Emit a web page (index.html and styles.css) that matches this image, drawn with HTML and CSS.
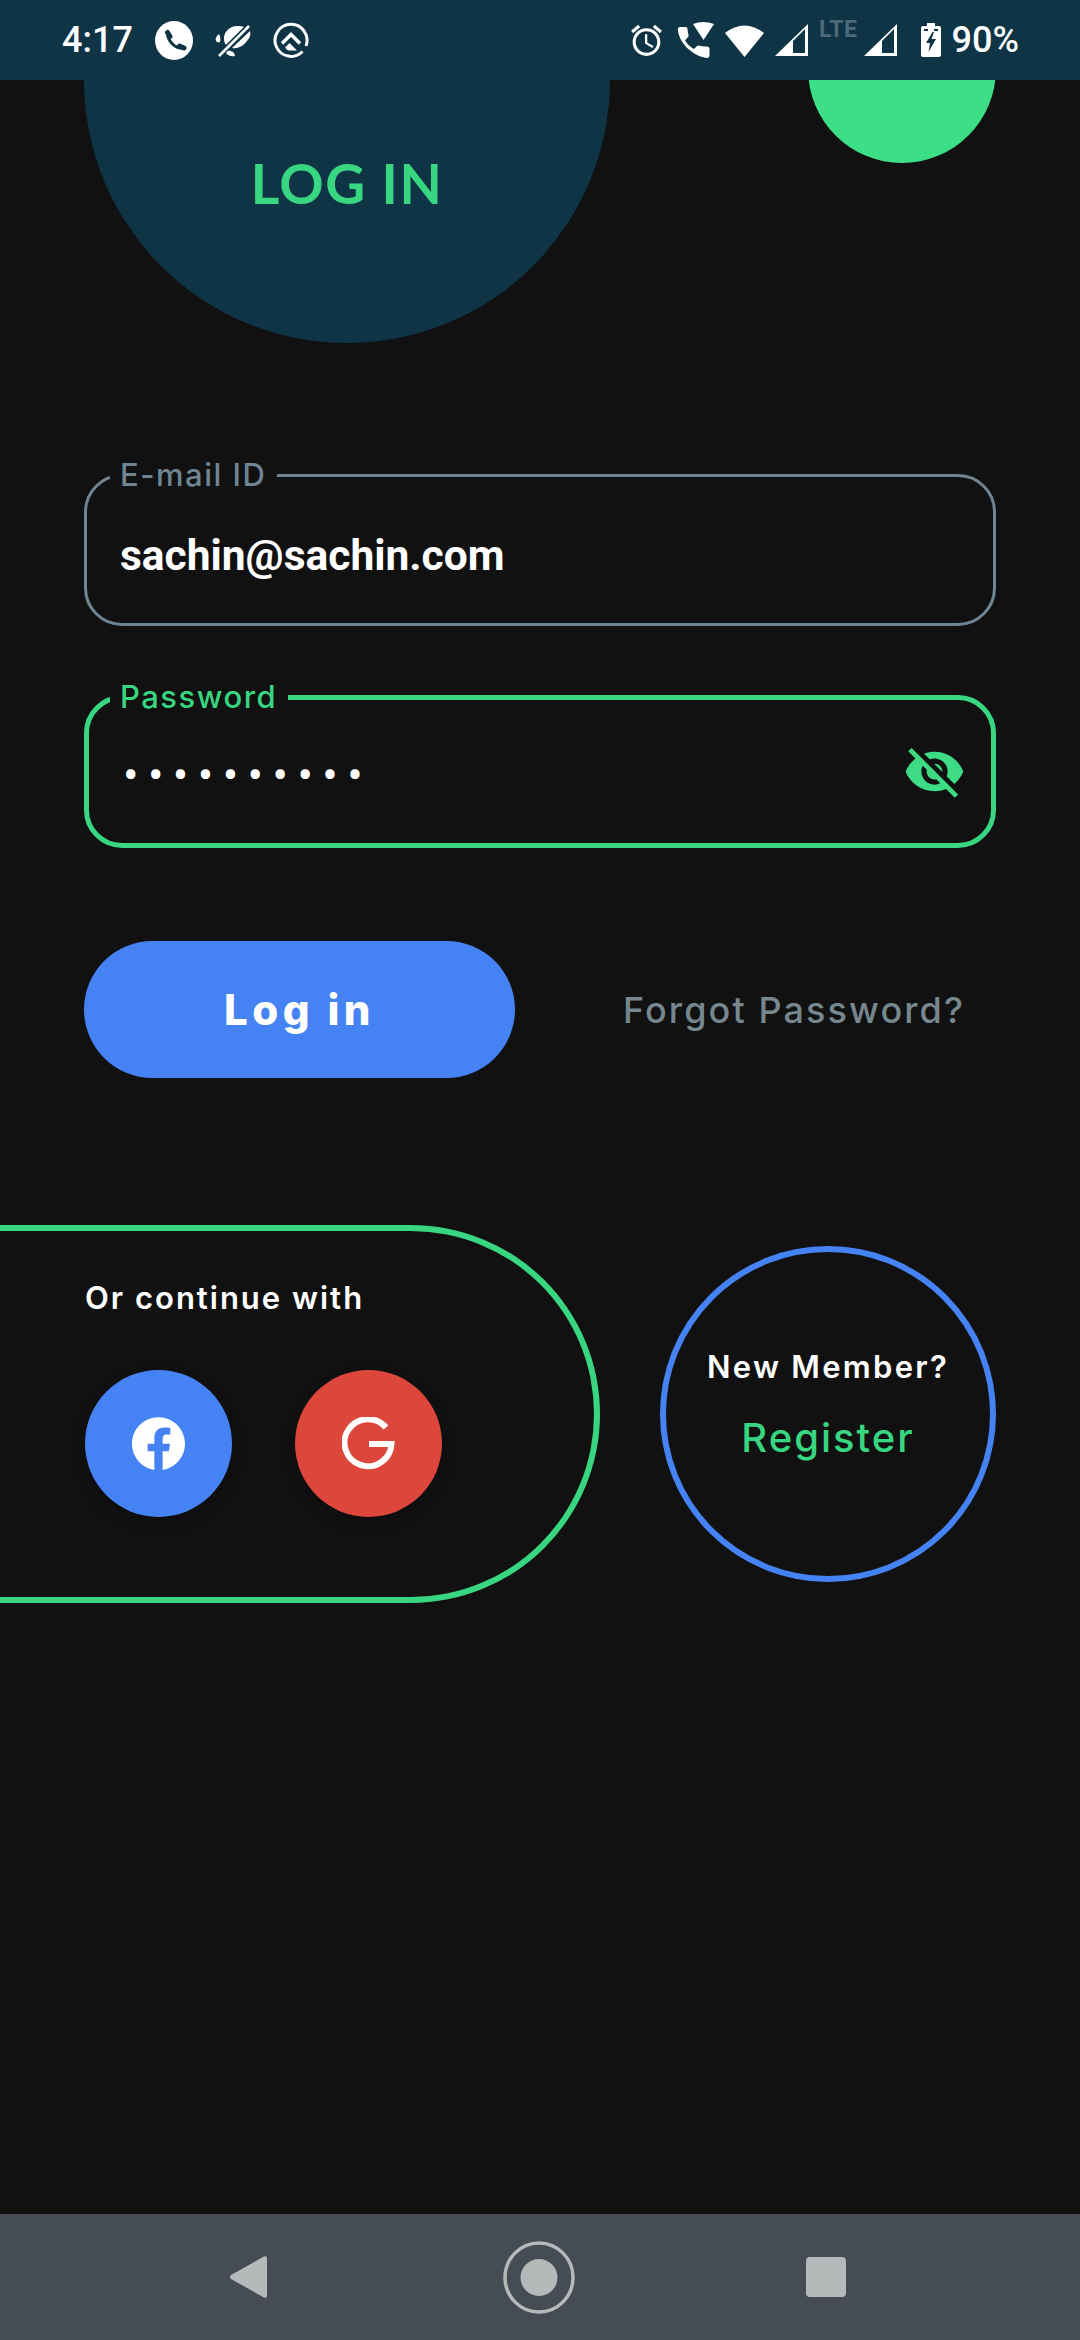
FILE: index.html
```html
<!DOCTYPE html>
<html lang="en">
<head>
    <meta charset="UTF-8">
    <meta name="viewport" content="width=device-width, initial-scale=1.0">
    <title>Log in</title>
    <link rel="stylesheet" href="styles.css">
</head>
<body>
    <div id="app">
        <header class="status-bar">
            <div class="status-left">
                <span class="status-time">4:17</span>
                <svg class="icon-chat" width="38" height="39" viewBox="0 0 38 39"><ellipse cx="19" cy="19.500" rx="19" ry="19.500" fill="#fff"/><path fill="none" stroke="#0e3446" stroke-width="3" d="M12.500 12C12.500 20 20 27.500 28 27.500"/><path fill="none" stroke="#0e3446" stroke-width="5" stroke-linecap="round" d="M12.500 11.500 15 15.500M24.500 25 29 27"/></svg>
                <svg class="icon-leaf" width="36" height="33" viewBox="0 0 36 33"><path fill="#fff" d="M9 14C9 8 15 2 22 2c3 0 5 0 7 1L11 21c-1.500-2-2-4-2-7zM17 24 35 7c1 3 0 7-3 10-4 5-9 8-15 7zM1 17c-1-2 0-5 3-7 1 2 2 5 1 8-2 1-3 0-4-1zM10 28c2-2 5-2 8 0 1 1 2 3 2 4-3 1-7 0-10-4z"/><path stroke="#0e3446" stroke-width="5.500" d="M3 33 35 1"/><path stroke="#fff" stroke-width="2.500" d="M4 32 34 2"/></svg>
                <svg class="icon-q" width="36" height="36" viewBox="0 0 36 36"><path fill="none" stroke="#fff" stroke-width="3" d="M29.500 29.500A16 16 0 1 1 33 24"/><path fill="none" stroke="#fff" stroke-width="3.500" d="M9 21.500 18 12.500 27 21.500"/><path fill="#fff" d="M12 25.500 16.500 21 24 28.500H15z"/></svg>
            </div>
            <div class="status-right">
                <svg class="icon-alarm" width="37" height="37" viewBox="0 0 24 24"><path fill="#fff" d="M22 5.720l-4.600-3.860-1.290 1.530 4.600 3.860L22 5.720zM7.880 3.390L6.600 1.860 2 5.710l1.290 1.530 4.590-3.850zM12.500 8H11v6l4.750 2.850.75-1.230-4-2.370V8zM12 4c-4.970 0-9 4.030-9 9s4.020 9 9 9c4.970 0 9-4.030 9-9s-4.030-9-9-9zm0 16c-3.870 0-7-3.130-7-7s3.130-7 7-7 7 3.130 7 7-3.130 7-7 7z"/></svg>
                <svg class="icon-call" width="36" height="36" viewBox="0 0 36 36"><path fill="#fff" d="M15 2Q25-2 36 2L25.500 18zM2 5h5c1.500 0 2.500 .5 2.500 2 0 2 .5 4 1 6 .2 1 0 1.500-.5 2l-3 3.500c2.500 4 5.500 6.500 9 8.500l3-3c.5-.5 1.500-.7 2-.5 2 .7 5 1 8 1 1.500 0 2.500 1 2.500 2v7c0 1.500-1 2.500-2.500 2.500C14 34 0 20 0 7c0-1 .5-2 2-2z"/></svg>
                <svg class="icon-wifi" width="39" height="33" viewBox="0 0 39 33"><path fill="#fff" d="M19.500 33 0 9Q19.500-6 39 9z"/></svg>
                <svg class="icon-signal" width="33" height="32" viewBox="0 0 33 32"><path fill="#fff" fill-rule="evenodd" d="M33 0V32H0zM18 17V29H30V5z"/></svg>
                <span class="status-lte">LTE</span>
                <svg class="icon-signal sig-tight" width="33" height="32" viewBox="0 0 33 32"><path fill="#fff" fill-rule="evenodd" d="M33 0V32H0zM18 17V29H30V5z"/></svg>
                <svg class="icon-battery" width="20" height="34" viewBox="0 0 20 34"><path fill="#fff" fill-rule="evenodd" d="M6 0H14V3H18Q20 3 20 5V32Q20 34 18 34H2Q0 34 0 32V5Q0 3 2 3H6zM11.500 9 5 20H9L7.500 29 15 16H10.500L13 9zM3 6H7V8H3zM13 6H17V8H13z"/></svg>
                <span class="status-battery">90%</span>
            </div>
        </header>

        <main>
            <div class="hero">
                <div class="hero-circle"><h1>LOG IN</h1></div>
                <div class="accent-circle"></div>
            </div>

            <form class="login-form">
                <fieldset class="field">
                    <legend>E-mail ID</legend>
                    <div class="field-row"><span class="field-value">sachin@sachin.com</span></div>
                </fieldset>
                <fieldset class="field field-active">
                    <legend>Password</legend>
                    <div class="field-row">
                        <span class="field-dots">••••••••••</span>
                        <svg class="icon-eye" width="63" height="63" viewBox="0 0 24 24"><path fill="#3ddc84" d="M12 7c2.760 0 5 2.240 5 5 0 .650-.130 1.260-.360 1.830l2.920 2.920c1.510-1.260 2.700-2.890 3.430-4.750-1.730-4.390-6-7.500-11-7.500-1.400 0-2.740.250-3.980.700l2.160 2.160C10.740 7.130 11.350 7 12 7zM2 4.270l2.280 2.280.460.460C3.080 8.300 1.780 10.020 1 12c1.730 4.390 6 7.500 11 7.500 1.550 0 3.030-.300 4.380-.840l.420.420L19.730 22 21 20.730 3.270 3 2 4.270zM7.530 9.800l1.550 1.550c-.050.210-.080.430-.080.650 0 1.660 1.340 3 3 3 .220 0 .440-.030.650-.080l1.550 1.550c-.670.330-1.410.530-2.200.530-2.760 0-5-2.240-5-5 0-.790.200-1.530.530-2.200zm4.310-.780l3.150 3.150.020-.160c0-1.660-1.340-3-3-3l-.170.010z"/></svg>
                    </div>
                </fieldset>
                <div class="form-actions">
                    <button type="button" class="login-btn">Log in</button>
                    <a class="forgot-link">Forgot Password?</a>
                </div>
            </form>

            <section class="bottom-row">
                <div class="social-pill">
                    <p class="social-title">Or continue with</p>
                    <div class="social-buttons">
                        <button type="button" class="social-btn social-fb">
                            <svg width="53" height="53" viewBox="0 0 24 24"><path fill="#fff" d="M24 12.073c0-6.627-5.373-12-12-12s-12 5.373-12 12c0 5.990 4.388 10.954 10.125 11.854v-8.385H7.078v-3.470h3.047V9.430c0-3.007 1.792-4.669 4.533-4.669 1.312 0 2.686.235 2.686.235v2.953H15.830c-1.491 0-1.956.925-1.956 1.874v2.250h3.328l-.532 3.470h-2.796v8.385C19.612 23.027 24 18.062 24 12.073z"/></svg>
                        </button>
                        <button type="button" class="social-btn social-google">
                            <svg width="53" height="53" viewBox="0 0 53 53"><path fill="none" stroke="#fff" stroke-width="6" d="M44 10.500A23.500 23.500 0 1 0 49.500 27H27"/></svg>
                        </button>
                    </div>
                </div>
                <div class="register-circle">
                    <p class="register-title">New Member?</p>
                    <a class="register-link">Register</a>
                </div>
            </section>
        </main>

        <nav class="nav-bar">
            <svg class="nav-back" width="37" height="42" viewBox="0 0 37 42"><path fill="#b5b9ba" d="M34 .5Q37-.5 37 2V40Q37 42.500 34 41.500L1 23Q-1 21 1 19z"/></svg>
            <svg class="nav-home" width="72" height="73" viewBox="0 0 72 73"><ellipse cx="36" cy="36.500" rx="34" ry="34.500" fill="none" stroke="#b5b9ba" stroke-width="3.500"/><circle cx="36" cy="36.500" r="18.500" fill="#b5b9ba"/></svg>
            <div class="nav-recent"></div>
        </nav>
    </div>
</body>
</html>
```

FILE: styles.css
```css
* {
    box-sizing: border-box;
}

body {
    margin: 0;
    background: #111111;
    color: white;
    font-family: Inter, "Liberation Sans", sans-serif;
}

#app {
    display: flex;
    flex-direction: column;
    width: 1080px;
    height: 2340px;
    overflow: hidden;
}

/* Status bar */
.status-bar {
    position: relative;
    z-index: 2;
    display: flex;
    justify-content: space-between;
    align-items: center;
    height: 80px;
    padding: 0 61px 0 62px;
    background: #0e3446;
    font-family: Roboto, sans-serif;
    font-size: 36px;
    font-weight: 500;
}

.status-left,
.status-right {
    display: flex;
    align-items: center;
}

.status-left {
    gap: 22px;
}

.status-right {
    gap: 11px;
}

.icon-call {
    margin-left: 2px;
}

.status-lte {
    align-self: flex-start;
    margin-top: -3px;
    font-size: 23px;
    font-weight: 700;
    letter-spacing: 0.5px;
    color: #4d6978;
}

.sig-tight {
    margin-left: -5px;
}

.icon-battery {
    margin-left: 13px;
}

/* Hero */
.hero {
    display: flex;
    justify-content: space-between;
    align-items: flex-start;
    padding: 0 84px;
}

.hero-circle {
    display: flex;
    justify-content: center;
    align-items: flex-end;
    width: 526px;
    height: 526px;
    margin-top: -263px;
    padding-bottom: 133px;
    border-radius: 50%;
    background: #0e3446;
}

.hero-circle h1 {
    margin: 0;
    font-family: Lato, sans-serif;
    font-size: 55px;
    font-weight: 700;
    letter-spacing: 1.5px;
    line-height: 54px;
    color: #38d680;
}

.accent-circle {
    width: 188px;
    height: 188px;
    margin-top: -105px;
    border-radius: 50%;
    background: #3ddf86;
}

/* Form */
.login-form {
    display: flex;
    flex-direction: column;
    gap: 56px;
    margin-top: 117px;
    padding: 0 84px;
}

.field {
    margin: 0;
    padding: 0 32px 0 33px;
    min-width: 0;
    height: 166px;
    border: 3px solid #6f8594;
    border-radius: 38px;
}

.field legend {
    margin-left: -10px;
    padding: 0 11px 0 10px;
    font-size: 31px;
    font-weight: 500;
    letter-spacing: 1.5px;
    line-height: 30px;
    color: #6f8594;
}

.field-row {
    display: flex;
    justify-content: space-between;
    align-items: center;
    height: 130px;
}

.field-value {
    font-family: Roboto, sans-serif;
    font-size: 42.500px;
    font-weight: 700;
}

.field-active {
    padding: 0 25px 0 31px;
    border: 5px solid #38d680;
}

.field-active legend {
    color: #38d680;
}

.field-active .field-row {
    height: 126px;
}

.field-dots {
    padding-left: 3px;
    font-family: Roboto, sans-serif;
    font-size: 46px;
    letter-spacing: 9.400px;
}

.icon-eye {
    margin-bottom: 8px;
}

.form-actions {
    display: flex;
    justify-content: space-between;
    align-items: center;
    margin-top: 37px;
    padding-right: 31px;
}

.login-btn {
    width: 431px;
    height: 137px;
    border: none;
    border-radius: 69px;
    background: #4583f5;
    color: white;
    font-family: inherit;
    font-size: 42px;
    font-weight: 800;
    letter-spacing: 4.400px;
}

.forgot-link {
    font-size: 36px;
    font-weight: 500;
    letter-spacing: 2.100px;
    color: #76878f;
}

/* Bottom row */
.bottom-row {
    display: flex;
    justify-content: space-between;
    align-items: center;
    margin-top: 147px;
    padding-right: 84px;
}

.social-pill {
    width: 600px;
    height: 378px;
    padding: 47px 0 0 85px;
    border: 6px solid #38d680;
    border-left: none;
    border-radius: 0 189px 189px 0;
}

.social-title {
    margin: 0;
    font-size: 31px;
    font-weight: 600;
    letter-spacing: 2px;
    line-height: 40px;
}

.social-buttons {
    display: flex;
    gap: 63px;
    margin-top: 52px;
}

.social-btn {
    display: flex;
    justify-content: center;
    align-items: center;
    width: 147px;
    height: 147px;
    padding: 0;
    border: none;
    border-radius: 50%;
    box-shadow: 0 6px 12px rgba(0, 0, 0, 0.25);
}

.social-fb {
    background: #4583f5;
}

.social-google {
    background: #dc463b;
}

.register-circle {
    display: flex;
    flex-direction: column;
    align-items: center;
    width: 336px;
    height: 336px;
    padding-top: 95px;
    border: 6px solid #4583f5;
    border-radius: 50%;
}

.register-title {
    margin: 0;
    font-size: 31px;
    font-weight: 600;
    letter-spacing: 2.300px;
    line-height: 40px;
}

.register-link {
    margin-top: 26px;
    font-size: 40px;
    font-weight: 500;
    letter-spacing: 2px;
    color: #38d680;
}

/* Nav bar */
.nav-bar {
    display: flex;
    justify-content: space-between;
    align-items: center;
    height: 126px;
    margin-top: auto;
    padding: 0 234px 0 230px;
    background: #454c53;
}

.nav-home {
    margin-left: 5px;
}

.nav-recent {
    width: 40px;
    height: 40px;
    border-radius: 4px;
    background: #b5b9ba;
}
```
